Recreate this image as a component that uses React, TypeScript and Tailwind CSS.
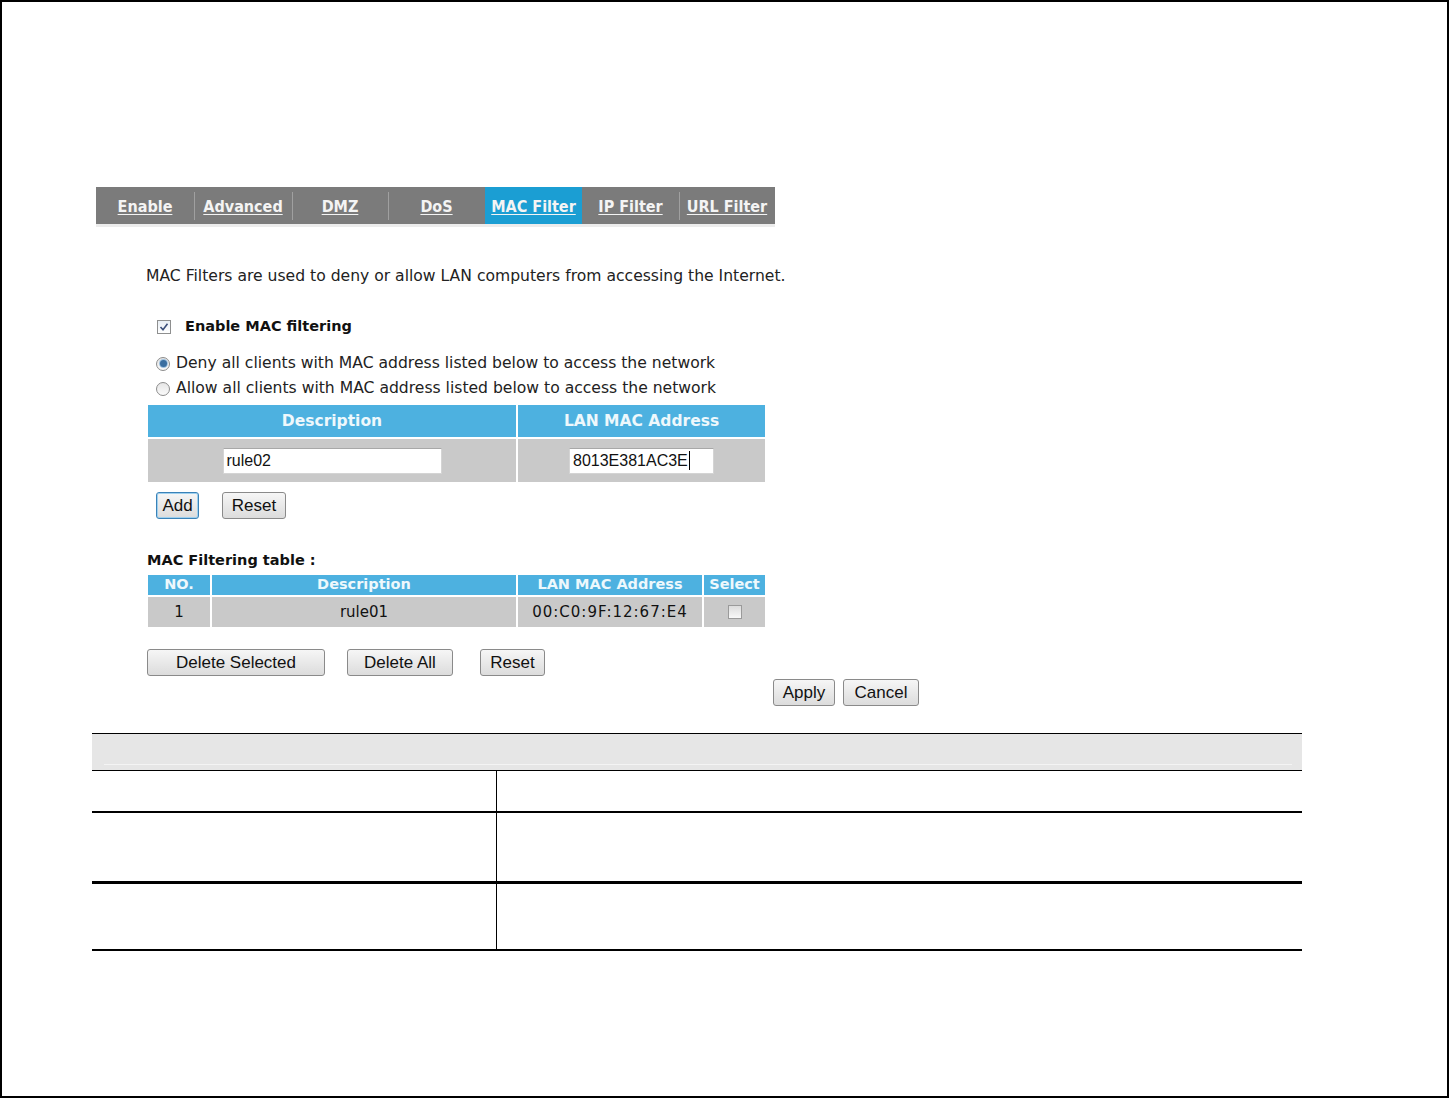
import React from "react";

const body = { fontFamily: '"DejaVu Sans", Verdana, sans-serif' };
const arial = { fontFamily: '"Liberation Sans", Arial, sans-serif' };

function Btn({ children, w, focus }: { children: React.ReactNode; w: string; focus?: boolean }) {
  return (
    <div
      className={`${w} h-[27px] flex items-center justify-center rounded-[3px] border text-[17px] text-[#111] bg-gradient-to-b from-[#f6f6f6] to-[#dcdcdc] ${
        focus ? "border-[#3a82b8] shadow-[inset_0_0_0_1px_#9fd0ee]" : "border-[#8a8a8a]"
      }`}
      style={arial}
    >
      {children}
    </div>
  );
}

function Radio({ checked }: { checked?: boolean }) {
  return (
    <div className="w-[14px] h-[14px] rounded-full border border-[#8c8c8c] bg-gradient-to-b from-[#e6e6e6] to-[#fafafa] flex items-center justify-center">
      {checked && <div className="w-[7px] h-[7px] rounded-full bg-[#3a6ea0] shadow-[0_0_0_1px_#9fc2e0]" />}
    </div>
  );
}

const tabs = ["Enable", "Advanced", "DMZ", "DoS", "MAC Filter", "IP Filter", "URL Filter"];
const tabW = [98, 98, 96, 97, 97, 97, 96];

export default function App() {
  return (
    <div className="w-[1449px] h-[1098px] bg-white border-2 border-black box-border flex flex-col" style={body}>
      {/* Tab bar */}
      <div className="pl-[94px] pt-[185px]">
        <div className="flex w-[679px] h-[37px] bg-[#7b7b7b]">
          {tabs.map((t, i) => {
            const active = t === "MAC Filter";
            const sep = i > 0 && !active && tabs[i - 1] !== "MAC Filter";
            return (
              <div
                key={t}
                className={`relative h-full flex items-center justify-center pt-[3px] ${active ? "bg-[#1b9ed3]" : ""}`}
                style={{ width: tabW[i] }}
              >
                {sep && <div className="absolute left-0 top-[5px] bottom-[4px] w-px bg-[#a0a0a0]" />}
                <span
                  className="text-[16px] font-bold underline underline-offset-[2px] text-[#f4f4f4]"
                  style={{ fontFamily: '"DejaVu Sans Condensed", "DejaVu Sans", sans-serif' }}
                >
                  {t}
                </span>
              </div>
            );
          })}
        </div>
        <div className="w-[679px] h-[3px] bg-[#ececec]" />
      </div>

      {/* Content */}
      <div className="pl-[144px] flex flex-col">
        <div className="mt-[39px] h-[20px] leading-[20px] text-[15.6px] text-[#222]">
          MAC Filters are used to deny or allow LAN computers from accessing the Internet.
        </div>

        <div className="mt-[31px] h-[20px] flex items-center pl-[11px]">
          <div className="w-[14px] h-[14px] border border-[#8e8f8f] bg-gradient-to-b from-[#e8eef4] to-[#ffffff] flex items-center justify-center">
            <svg width="10" height="10" viewBox="0 0 10 10">
              <path d="M1.5 5 L4 7.8 L8.5 1.8" fill="none" stroke="#3b4f7a" strokeWidth="1.6" />
            </svg>
          </div>
          <span className="ml-[14px] text-[14.5px] font-bold text-[#111]">Enable MAC filtering</span>
        </div>

        <div className="mt-[14px] flex flex-col pl-[10px]">
          <div className="h-[25px] flex items-center gap-[6px] text-[15.6px] text-[#222]">
            <Radio checked />
            <span>Deny all clients with MAC address listed below to access the network</span>
          </div>
          <div className="h-[25px] flex items-center gap-[6px] text-[15.6px] text-[#222]">
            <Radio />
            <span>Allow all clients with MAC address listed below to access the network</span>
          </div>
        </div>

        {/* Table 1 */}
        <div className="mt-[4px] ml-[2px] w-[617px] grid grid-cols-[368px_247px] gap-[2px]">
          <div className="h-[32px] pt-[2px] bg-[#4db1e0] flex items-center justify-center text-[15.5px] font-bold text-[#eef8fc]">
            Description
          </div>
          <div className="h-[32px] pt-[2px] bg-[#4db1e0] flex items-center justify-center text-[15.5px] font-bold text-[#eef8fc]">
            LAN MAC Address
          </div>
          <div className="h-[43px] bg-[#c9c9c9] flex items-center justify-center">
            <div className="w-[219px] h-[26px] bg-white border border-[#d4d4d4] border-t-[#a8a8a8] flex items-center pl-[3px] text-[16px] text-[#111]" style={arial}>
              rule02
            </div>
          </div>
          <div className="h-[43px] bg-[#c9c9c9] flex items-center justify-center">
            <div className="w-[145px] h-[26px] bg-white border border-[#d4d4d4] border-t-[#a8a8a8] flex items-center pl-[3px] text-[16px] text-[#111]" style={arial}>
              8013E381AC3E<span className="inline-block w-px h-[19px] bg-black ml-px" />
            </div>
          </div>
        </div>

        <div className="mt-[10px] flex items-center pl-[10px] gap-[23px]">
          <Btn w="w-[43px]" focus>Add</Btn>
          <Btn w="w-[64px]">Reset</Btn>
        </div>

        <div className="mt-[31px] h-[20px] leading-[20px] ml-[1px] text-[14.5px] font-bold text-[#111]">MAC Filtering table :</div>

        {/* Table 2 */}
        <div className="mt-[5px] ml-[2px] w-[617px] grid grid-cols-[62px_304px_184px_61px] gap-[2px]">
          {["NO.", "Description", "LAN MAC Address", "Select"].map((h) => (
            <div key={h} className="h-[20px] bg-[#4db1e0] flex items-center justify-center text-[14.5px] font-bold text-[#eef8fc]">
              {h}
            </div>
          ))}
          <div className="h-[30px] bg-[#c9c9c9] flex items-center justify-center text-[15px] text-[#111]">1</div>
          <div className="h-[30px] bg-[#c9c9c9] flex items-center justify-center text-[15px] text-[#111]">rule01</div>
          <div className="h-[30px] bg-[#c9c9c9] flex items-center justify-center text-[15px] text-[#111] tracking-[1px]">00:C0:9F:12:67:E4</div>
          <div className="h-[30px] bg-[#c9c9c9] flex items-center justify-center">
            <div className="w-[14px] h-[14px] border border-[#9a9a9a] bg-gradient-to-b from-[#dcdcdc] to-[#f8f8f8]" />
          </div>
        </div>

        <div className="mt-[22px] flex items-center ml-[1px]">
          <Btn w="w-[178px]">Delete Selected</Btn>
          <div className="w-[22px]" />
          <Btn w="w-[106px]">Delete All</Btn>
          <div className="w-[27px]" />
          <Btn w="w-[65px]">Reset</Btn>
        </div>

        <div className="mt-[3px] flex items-center ml-[627px] gap-[8px]">
          <Btn w="w-[62px]">Apply</Btn>
          <Btn w="w-[76px]">Cancel</Btn>
        </div>
      </div>

      {/* Bottom table */}
      <div className="mt-[27px] ml-[90px] w-[1210px] flex flex-col">
        <div className="h-[37px] bg-[#e6e6e6] border-t border-black flex flex-col justify-end pb-[5px]">
          <div className="ml-[12px] mr-[10px] h-px bg-[#f4f4f4]" />
        </div>
        <div className="h-px bg-black" />
        <div className="grid grid-cols-[405px_1fr]">
          <div className="h-[40px] border-r border-black" />
          <div className="h-[40px]" />
        </div>
        <div className="h-[2px] bg-black" />
        <div className="grid grid-cols-[405px_1fr]">
          <div className="h-[68px] border-r border-black" />
          <div className="h-[68px]" />
        </div>
        <div className="h-[3px] bg-black" />
        <div className="grid grid-cols-[405px_1fr]">
          <div className="h-[65px] border-r border-black" />
          <div className="h-[65px]" />
        </div>
        <div className="h-[2px] bg-black" />
      </div>
    </div>
  );
}
